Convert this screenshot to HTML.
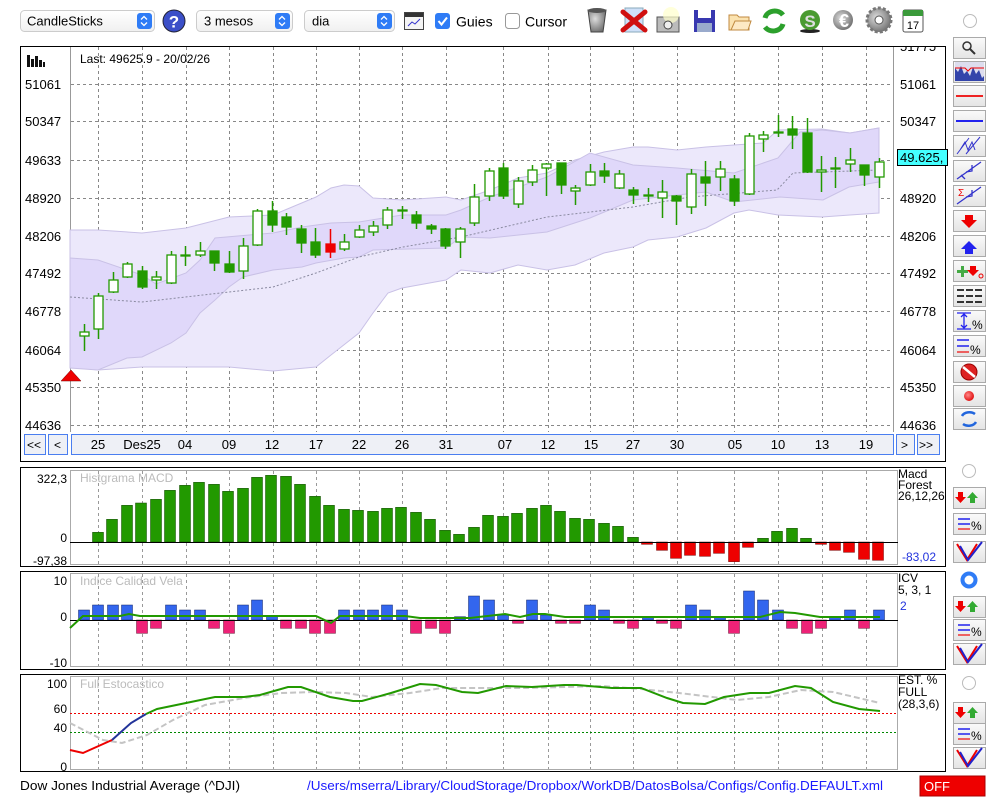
<!DOCTYPE html>
<html><head><meta charset="utf-8"><style>
html,body{margin:0;padding:0;background:#fff;width:1000px;height:800px;overflow:hidden}
svg{display:block;font-family:"Liberation Sans",sans-serif}
</style></head><body>
<svg id="s" width="1000" height="800" viewBox="0 0 1000 800" xmlns="http://www.w3.org/2000/svg">
<defs>
<linearGradient id="sel" x1="0" y1="0" x2="0" y2="1"><stop offset="0" stop-color="#fff"/><stop offset="1" stop-color="#f0f0f0"/></linearGradient>
<linearGradient id="btn" x1="0" y1="0" x2="0" y2="1"><stop offset="0" stop-color="#fafafa"/><stop offset="1" stop-color="#e4e4e4"/></linearGradient>
<radialGradient id="gr" cx="0.4" cy="0.4" r="0.7"><stop offset="0" stop-color="#ddd"/><stop offset="1" stop-color="#666"/></radialGradient>
<radialGradient id="rd" cx="0.4" cy="0.4" r="0.7"><stop offset="0" stop-color="#ff8888"/><stop offset="1" stop-color="#dd0000"/></radialGradient>
<clipPath id="topclip"><rect x="890" y="47" width="60" height="20"/></clipPath>
</defs>
<g font-size="13">
<rect x="20.5" y="10.5" width="134" height="21" rx="4" fill="url(#sel)" stroke="#ccc"/>
<text x="27" y="25.5">CandleSticks</text>
<rect x="137" y="13" width="15" height="16" rx="3" fill="#2f7cf6"/>
<path d="M141 19.5l3-3 3 3M141 22.5l3 3 3-3" stroke="#fff" stroke-width="1.3" fill="none"/>
<circle cx="174" cy="21" r="11" fill="#3b4fc8" stroke="#223" stroke-width="1"/>
<text x="174" y="27.5" font-size="17" font-weight="bold" fill="#fff" text-anchor="middle">?</text>
<rect x="196.5" y="10.5" width="96" height="21" rx="4" fill="url(#sel)" stroke="#ccc"/>
<text x="204" y="25.5">3 mesos</text>
<rect x="275" y="13" width="15" height="16" rx="3" fill="#2f7cf6"/>
<path d="M279 19.5l3-3 3 3M279 22.5l3 3 3-3" stroke="#fff" stroke-width="1.3" fill="none"/>
<rect x="304.5" y="10.5" width="90" height="21" rx="4" fill="url(#sel)" stroke="#ccc"/>
<text x="312" y="25.5">dia</text>
<rect x="377" y="13" width="15" height="16" rx="3" fill="#2f7cf6"/>
<path d="M381 19.5l3-3 3 3M381 22.5l3 3 3-3" stroke="#fff" stroke-width="1.3" fill="none"/>
<rect x="404.5" y="12.5" width="19" height="17" fill="#f4f4f4" stroke="#444"/>
<rect x="405" y="13" width="18" height="4" fill="#333"/>
<path d="M408 26l4-4 3 2 5-5" stroke="#33c" fill="none"/>
<rect x="435" y="13" width="15" height="16" rx="3" fill="#2f7cf6"/>
<path d="M438.5 21l3 3.5 5.5-7" stroke="#fff" stroke-width="2" fill="none"/>
<text x="456" y="26.5" font-size="14">Guies</text>
<rect x="505.5" y="13.5" width="14" height="15" rx="3" fill="#fff" stroke="#999"/>
<text x="525" y="26.5" font-size="14">Cursor</text>
</g>
<path d="M588 10h18l-3 22h-12z" fill="url(#gr)" stroke="#444"/>
<ellipse cx="597" cy="10.5" rx="9" ry="2.5" fill="#555"/>
<rect x="625" y="8" width="18" height="24" fill="#cfe0f8" stroke="#8ab"/>
<path d="M623 12l22 18M645 12l-22 18" stroke="#d01010" stroke-width="5" stroke-linecap="round"/>
<rect x="657" y="17" width="22" height="15" fill="#bbb" stroke="#555"/>
<circle cx="671" cy="15" r="8" fill="#ffffcc" opacity="0.7"/>
<circle cx="668" cy="25" r="4" fill="#eee" stroke="#444"/>
<rect x="694" y="10" width="21" height="22" fill="#3838b0"/>
<rect x="698" y="10" width="13" height="8" fill="#fff"/>
<rect x="697" y="23" width="15" height="9" fill="#9ac"/>
<path d="M729 15h8l2 2h10v13h-20z" fill="#fbe3b0" stroke="#c08a40"/>
<path d="M731 30l4-9h16l-3 9z" fill="#fde9c4" stroke="#c08a40"/>
<path d="M765 18a10 9 0 0 1 18-3" stroke="#2ca02c" stroke-width="5" fill="none"/>
<path d="M783 24a10 9 0 0 1-18 3" stroke="#2ca02c" stroke-width="5" fill="none"/>
<ellipse cx="810" cy="31" rx="10" ry="2" fill="#222"/>
<circle cx="810" cy="20" r="10" fill="#4a9a30"/>
<text x="810" y="27" font-size="17" font-weight="bold" fill="#ddd" text-anchor="middle">S</text>
<circle cx="843" cy="20" r="10" fill="url(#gr)"/>
<text x="844" y="27" font-size="18" font-weight="bold" fill="#fff" text-anchor="middle">€</text>
<circle cx="879" cy="20" r="12" fill="url(#gr)" stroke="#777" stroke-dasharray="3 2" stroke-width="3"/>
<circle cx="879" cy="20" r="4" fill="#fff" stroke="#555"/>
<rect x="903" y="10" width="20" height="22" rx="2" fill="#fff" stroke="#555"/>
<rect x="903" y="10" width="20" height="6" fill="#3a9a3a"/>
<text x="913" y="29" font-size="11" text-anchor="middle">17</text>
<circle cx="970" cy="21" r="6.5" fill="#fff" stroke="#bbb"/>

<rect x="20.5" y="46.5" width="925" height="415" fill="#fff" stroke="#000"/>
<line x1="70.5" y1="47" x2="70.5" y2="432" stroke="#999"/>
<line x1="893.5" y1="47" x2="893.5" y2="432" stroke="#999"/>
<g id="grid" stroke="#888" stroke-dasharray="3 3" stroke-width="1"></g>
<g id="bands"></g>
<g id="candles"></g>
<polygon points="61,381 71,370 81,381" fill="#e00" stroke="#700" stroke-width="0.5"/>
<g fill="#111"><rect x="27" y="55" width="3" height="12"/><rect x="31" y="59" width="3" height="8"/><rect x="35" y="56" width="3" height="11"/><rect x="39" y="60" width="3" height="7"/><rect x="43" y="62" width="2" height="5"/></g>
<text x="80" y="63" font-size="12">Last: 49625.9 - 20/02/26</text>
<g font-size="13" id="plab"></g>
<text x="900" y="51" font-size="13" clip-path="url(#topclip)">51775</text>
<rect x="897.5" y="149.5" width="50" height="16" fill="#44ffff" stroke="#000"/>
<text x="900" y="162" font-size="13">49.625,</text>
<g font-size="12">
<rect x="24.5" y="434.5" width="21" height="20" fill="#eef0f6" stroke="#4a7ef0"/><text x="27" y="449">&lt;&lt;</text>
<rect x="48.5" y="434.5" width="19" height="20" fill="#eef0f6" stroke="#4a7ef0"/><text x="54" y="449">&lt;</text>
<rect x="71.5" y="434.5" width="822" height="20" fill="#eef0f6" stroke="#4a7ef0"/>
<rect x="896.5" y="434.5" width="18" height="20" fill="#eef0f6" stroke="#4a7ef0"/><text x="901" y="449">&gt;</text>
<rect x="917.5" y="434.5" width="22" height="20" fill="#eef0f6" stroke="#4a7ef0"/><text x="919" y="449">&gt;&gt;</text>
<g id="dlab" font-size="13" text-anchor="middle"></g>
</g>

<rect x="20.5" y="467.5" width="925" height="99" fill="#fff" stroke="#000"/>
<rect x="70.5" y="470.5" width="827" height="94" fill="#fff" stroke="#aaa"/>
<g id="g2" stroke="#999" stroke-dasharray="3 3"></g>
<text x="80" y="482" font-size="12" fill="#bbb">Histgrama MACD</text>
<g id="macd"></g>
<line x1="70" y1="542.5" x2="898" y2="542.5" stroke="#000"/>
<g font-size="12" text-anchor="end"><text x="67" y="483">322,3</text><text x="67" y="542">0</text><text x="67" y="565">-97,38</text></g>
<g font-size="12"><text x="898" y="478">Macd</text><text x="898" y="489">Forest</text><text x="898" y="500">26,12,26</text><text x="902" y="561" fill="#2233dd">-83,02</text></g>

<rect x="20.5" y="571.5" width="925" height="98" fill="#fff" stroke="#000"/>
<rect x="70.5" y="573.5" width="827" height="93" fill="#fff" stroke="#aaa"/>
<g id="g3" stroke="#999" stroke-dasharray="3 3"></g>
<text x="80" y="585" font-size="12" fill="#bbb">Indice Calidad Vela</text>
<g id="icv"></g>
<line x1="70" y1="620.5" x2="898" y2="620.5" stroke="#000"/>
<polyline id="icvl" fill="none" stroke="#229900" stroke-width="2"/>
<g font-size="12" text-anchor="end"><text x="67" y="585">10</text><text x="67" y="621">0</text><text x="67" y="667">-10</text></g>
<g font-size="12"><text x="898" y="582">ICV</text><text x="898" y="594">5, 3, 1</text><text x="900" y="610" fill="#2233dd">2</text></g>

<rect x="20.5" y="674.5" width="925" height="97" fill="#fff" stroke="#000"/>
<rect x="70.5" y="676.5" width="827" height="93" fill="#fff" stroke="#aaa"/>
<g id="g4" stroke="#999" stroke-dasharray="3 3"></g>
<text x="80" y="688" font-size="12" fill="#bbb">Full Estocastico</text>
<line x1="70" y1="713.5" x2="898" y2="713.5" stroke="#e00" stroke-dasharray="2 2"/>
<line x1="70" y1="732.5" x2="898" y2="732.5" stroke="#080" stroke-dasharray="2 2"/>
<polyline fill="none" stroke="#c4c4c4" stroke-width="2" stroke-dasharray="6 3" points="70,723 103,740 122,743 147,735 173,720 205,705 244,698 282,693 314,692 346,693 372,697 410,693 442,688 481,688 526,688 564,687 603,686 641,689 679,693 737,700 769,697 801,690 833,692 880,703"/>
<polyline fill="none" stroke="#e00" stroke-width="2" points="70,750 83,753 112,740"/>
<polyline fill="none" stroke="#223399" stroke-width="2" points="112,740 131,723 146,714"/>
<polyline fill="none" stroke="#229900" stroke-width="2" points="146,714 157,709 186,703 215,697 244,697 260,695 288,687 301,687 330,697 353,701 362,701 391,693 420,684 436,685 462,692 478,693 506,686 532,687 564,685 577,685 612,688 641,688 667,698 683,703 705,704 724,697 750,693 769,693 795,686 811,688 833,702 859,709 880,711"/>
<g font-size="12" text-anchor="end"><text x="67" y="688">100</text><text x="67" y="713">60</text><text x="67" y="732">40</text><text x="67" y="771">0</text></g>
<g font-size="12"><text x="898" y="684">EST. %</text><text x="898" y="696">FULL</text><text x="898" y="708">(28,3,6)</text></g>

<g id="side"></g>

<text x="20" y="790" font-size="13" textLength="220" lengthAdjust="spacingAndGlyphs">Dow Jones Industrial Average (^DJI)</text>
<text x="307" y="790" font-size="13" fill="#1a1aff" textLength="576" lengthAdjust="spacingAndGlyphs">/Users/mserra/Library/CloudStorage/Dropbox/WorkDB/DatosBolsa/Configs/Config.DEFAULT.xml</text>
<rect x="920" y="776" width="65" height="20" fill="#ee0000"/>
<rect x="920" y="776" width="65" height="20" fill="none" stroke="#a00"/>
<text x="924" y="791" font-size="13" fill="#fff">OFF</text>
</svg>
<script>
var NS="http://www.w3.org/2000/svg";
function el(p,t,a,txt){var e=document.createElementNS(NS,t);for(var k in a)e.setAttribute(k,a[k]);if(txt!==undefined)e.textContent=txt;document.getElementById(p).appendChild(e);return e;}
var VX=[98,142,186,229,273,316,359,402,446,503,548,590,633,677,734,778,822,866];
var PY=[84,121,160,198,236,273,311,350,387,425];
VX.forEach(function(x){el('grid','line',{x1:x+.5,y1:47,x2:x+.5,y2:432});
 ['g2','g3','g4'].forEach(function(g,i){var t=[471,574,677][i],b=[564,666,769][i];el(g,'line',{x1:x+.5,y1:t,x2:x+.5,y2:b});});});
PY.forEach(function(y){el('grid','line',{x1:71,y1:y+.5,x2:893,y2:y+.5});});
var PL=['51061','50347','49633','48920','48206','47492','46778','46064','45350','44636'];
PL.forEach(function(l,i){el('plab','text',{x:25,y:PY[i]+5},l);el('plab','text',{x:900,y:PY[i]+5},l);});
var DL=[[98,'25'],[142,'Des25'],[185,'04'],[229,'09'],[272,'12'],[316,'17'],[359,'22'],[402,'26'],[446,'31'],[505,'07'],[548,'12'],[591,'15'],[633,'27'],[677,'30'],[735,'05'],[778,'10'],[822,'13'],[866,'19']];
DL.forEach(function(d){el('dlab','text',{x:d[0],y:449},d[1]);});
var ou="70,230 98,230 142,233 186,228 229,217 273,215 316,197 331,188 344,185 359,186 373,198 402,200 446,197 461,200 490,190 518,178 547,173 575,160 604,152 633,147 648,147 677,150 706,147 734,145 763,143 778,130 822,129 850,133 879,128";
var ol="879,213 850,215 822,217 778,215 749,210 734,213 706,228 677,237 648,240 633,247 604,253 575,265 547,270 518,265 490,273 461,270 446,280 402,288 388,293 373,313 359,333 331,355 316,367 273,371 229,367 186,367 142,367 98,370 70,367";
el('bands','polygon',{points:ou+" "+ol,fill:"#ece8fb",stroke:"#c9c1e6"});
var iu="70,258 98,260 142,275 156,284 186,273 200,260 215,238 273,233 302,227 331,223 359,222 402,215 446,215 461,210 490,197 547,177 590,153 633,165 677,168 734,173 778,158 800,132 822,130 850,133 879,128";
var il="879,182 849,187 823,200 780,197 734,202 706,192 677,195 633,200 590,218 547,232 490,238 461,237 446,248 373,250 359,257 344,258 316,263 302,267 273,270 243,277 229,287 215,300 200,313 186,333 171,343 142,357 127,358 98,370 70,368";
el('bands','polygon',{points:iu+" "+il,fill:"#e0d8fa",stroke:"#c9c1e6"});
el('bands','polyline',{points:"70,297 142,302 229,292 273,287 316,273 359,257 403,247 461,237 547,217 633,207 690,197 777,190 793,173 879,170",fill:"none",stroke:"#8a8aa0","stroke-dasharray":"2 2"});
var C=[['h',332,336,324,351],['h',296,329,293,339],['h',280,292,272,293],['h',264,277,262,278],['f',271,287,266,289],['h',277,280,271,289],['h',255,283,251,284],['h',255,256,246,266],['h',251,255,242,257],['f',251,263,251,271],['f',264,272,251,273],['h',246,271,238,279],['h',211,245,209,246],['f',211,225,201,232],['f',217,227,213,235],['f',229,243,225,253],['f',242,255,228,258],['r',244,252,229,258],['h',242,249,234,251],['h',230,237,225,238],['h',226,232,221,236],['h',210,225,207,229],['h',210,211,206,219],['f',215,223,211,229],['f',226,229,224,234],['f',229,246,228,249],['h',229,242,227,258],['h',197,223,184,226],['h',171,196,168,201],['f',168,196,163,199],['h',181,204,177,208],['h',170,182,165,186],['h',164,168,163,196],['f',163,185,163,194],['h',188,191,185,205],['h',172,185,164,186],['f',171,176,163,183],['h',174,188,170,189],['f',190,195,187,204],['h',195,196,188,202],['h',192,198,180,218],['f',196,201,195,225],['h',174,207,169,214],['f',177,183,161,206],['h',169,177,161,191],['f',179,201,175,206],['h',136,194,133,195],['h',135,139,131,152],['h',132,133,115,137],['f',129,135,116,149],['f',133,172,118,173],['h',170,172,156,192],['h',168,169,157,188],['h',160,164,148,172],['f',165,175,165,186],['h',162,177,158,188]];
C.forEach(function(c,i){var x=Math.round(84+i*14.45),col=c[0]=='r'?'#ee0000':'#229900';
 el('candles','line',{x1:x+.5,y1:c[3],x2:x+.5,y2:c[4],stroke:col,"stroke-width":1.5});
 var h=Math.max(c[2]-c[1],1);
 el('candles','rect',{x:x-4,y:c[1],width:9,height:h,fill:c[0]=='h'?'#fff':col,stroke:col,"stroke-width":1.3});});
var M=[307,268,226,219,208,181,166,157,163,184,175,142,136,139,163,199,226,238,241,244,235,232,247,268,301,313,292,256,259,250,235,226,244,265,268,280,289,322,343,361,385,376,379,370,395,352,325,304,295,325,343,361,367,388,391];
M.forEach(function(v,i){var x=Math.round(98+i*14.45),y=v/3+430;
 if(y<542)el('macd','rect',{x:x-5.5,y:y,width:11,height:542-y,fill:'#229900',stroke:'#114400',"stroke-width":0.5});
 else el('macd','rect',{x:x-5.5,y:542,width:11,height:Math.max(y-542,2),fill:'#ee0000',stroke:'#770000',"stroke-width":0.5});});
var I=[['b',540],['b',525],['b',525],['b',525],['p',610],['p',595],['b',525],['b',540],['b',540],['p',595],['p',610],['b',525],['b',510],['b',560],['p',595],['p',595],['p',610],['p',610],['b',540],['b',540],['b',540],['b',525],['b',540],['p',610],['p',595],['p',610],['b',560],['b',498],['b',510],['b',555],['p',580],['b',510],['b',555],['p',580],['p',580],['b',525],['b',540],['p',580],['p',595],['b',560],['p',580],['p',595],['b',525],['b',540],['b',560],['p',610],['b',483],['b',510],['b',540],['p',595],['p',610],['p',595],['b',560],['b',540],['p',595],['b',540]];
I.forEach(function(d,i){var x=Math.round(84+i*14.45),y=d[1]/3+430;
 if(d[0]=='b')el('icv','rect',{x:x-5.5,y:y,width:11,height:620-y,fill:'#3366ee',stroke:'#112266',"stroke-width":0.5});
 else el('icv','rect',{x:x-5.5,y:620,width:11,height:y-620,fill:'#ee2277',stroke:'#661133',"stroke-width":0.5});});
document.getElementById('icvl').setAttribute('points',"70,628 83,616 120,616 129,614 140,616 316,616 331,623 340,616 405,616 420,618 470,618 505,614 520,617 533,614 545,614 565,617 760,617 780,612 795,613 820,617 880,617");
function btn(y,h){el('side','rect',{x:953.5,y:y+.5,width:32,height:h||21,fill:'url(#btn)',stroke:'#aaa'});}
var SY=[37,61,85,110,135,160,185,210,235,260,285,310,335,361,385,408];
SY.forEach(function(y){btn(y);});
var s='side';
el(s,'circle',{cx:967,cy:46,r:4,fill:'none',stroke:'#333',"stroke-width":1.5});el(s,'line',{x1:970,y1:49,x2:975,y2:54,stroke:'#333',"stroke-width":2});
el(s,'rect',{x:955,y:62,width:29,height:19,fill:'#dde'});el(s,'path',{d:"M955 81V68l3 4 3-6 3 8 3-3 3 5 3-9 3 7 3-4 3 8 2-2V81z",fill:'#3344aa'});el(s,'path',{d:"M955 68h10l3 3 3-3h13",stroke:'#e00',fill:'none'});
el(s,'line',{x1:956,y1:96,x2:983,y2:96,stroke:'#e22',"stroke-width":2});
el(s,'line',{x1:956,y1:121,x2:983,y2:121,stroke:'#22e',"stroke-width":2});
el(s,'path',{d:"M957 154l12-16M966 154l14-17M960 150l5-8 3 8 4-8 3 8",stroke:'#33c',fill:'none'});
el(s,'path',{d:"M957 179l24-17M966 172l6-1 0-6M961 175l4 4",stroke:'#33c',fill:'none',"stroke-width":1.3});
el(s,'path',{d:"M957 204l24-17M966 197l6-1 0-6",stroke:'#33c',fill:'none',"stroke-width":1.3});el(s,'text',{x:958,y:196,"font-size":10,fill:'#e00'},'Σ');
el(s,'path',{d:"M965 215h8v5h4l-8 8-8-8h4z",fill:'#e00'});
el(s,'path',{d:"M965 254h8v-5h4l-8-8-8 8h4z",fill:'#22e'});
el(s,'path',{d:"M957 270h4v-4h3v4h4v3h-4v4h-3v-4h-4z",fill:'#4a4'});el(s,'path',{d:"M970 266h6v4h3l-6 6-6-6h3z",fill:'#e00'});el(s,'circle',{cx:981,cy:276,r:2,fill:'none',stroke:'#e00'});
[290,296,302].forEach(function(y){el(s,'path',{d:"M957 "+y+"h7M966 "+y+"h7M975 "+y+"h7",stroke:'#333',"stroke-width":2});});
el(s,'path',{d:"M957 313h14M957 329h14M964 314v14M961 317l3-3 3 3M961 325l3 3 3-3",stroke:'#22e',fill:'none',"stroke-width":1.3});el(s,'text',{x:972,y:329,"font-size":12},'%');
el(s,'path',{d:"M957 340h12M957 346h12",stroke:'#22e',"stroke-width":1.5});el(s,'path',{d:"M957 352h12",stroke:'#e33',"stroke-width":1.5});el(s,'text',{x:970,y:354,"font-size":12},'%');
el(s,'circle',{cx:969,cy:372,r:8,fill:'#d22',stroke:'#900'});el(s,'path',{d:"M963 367l12 10",stroke:'#fff',"stroke-width":2.5});
el(s,'circle',{cx:969,cy:396,r:5,fill:'url(#rd)'});
el(s,'path',{d:"M962 416a8 6 0 0 1 13-2M976 422a8 6 0 0 1-13 2",stroke:'#2266dd',"stroke-width":2.5,fill:'none'});
function grp(ry,b1,b2,b3,sel){
 el(s,'circle',{cx:969,cy:ry,r:6.5,fill:'#fff',stroke:sel?'#2f7cf6':'#bbb',"stroke-width":sel?4:1});
 btn(b1);btn(b2);btn(b3);
 el(s,'path',{d:"M958 "+(b1+5)+"h5v5h3l-5.5 6-5.5-6h3z",fill:'#e00'});
 el(s,'path',{d:"M970 "+(b1+16)+"h5v-5h3l-5.5-6-5.5 6h3z",fill:'#3a3'});
 el(s,'path',{d:"M958 "+(b2+6)+"h12M958 "+(b2+11)+"h12",stroke:'#22e',"stroke-width":1.5});el(s,'path',{d:"M958 "+(b2+16)+"h12",stroke:'#e33',"stroke-width":1.5});el(s,'text',{x:971,y:b2+17,"font-size":12},'%');
 el(s,'path',{d:"M957 "+(b3+3)+"l10 16 10-16",stroke:'#e00',"stroke-width":2,fill:'none'});el(s,'path',{d:"M960 "+(b3+5)+"l8 14 14-18",stroke:'#22c',"stroke-width":2,fill:'none'});
}
grp(471,487,513,541,false);
grp(580,596,619,643,true);
grp(683,702,723,747,false);
</script>
</body></html>
